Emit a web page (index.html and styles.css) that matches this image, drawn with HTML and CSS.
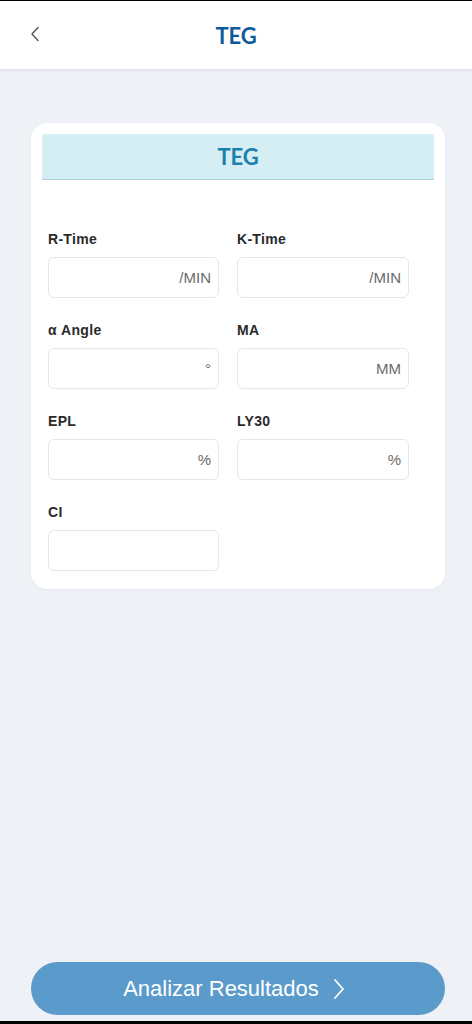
FILE: index.html
```html
<!DOCTYPE html>
<html lang="es">
<head>
<meta charset="utf-8">
<title>TEG</title>
<link rel="stylesheet" href="styles.css">
</head>
<body>
<div class="app">
  <header class="topbar">
    <button class="back" aria-label="Volver">
      <svg width="10" height="16" viewBox="0 0 10 16"><path d="M8 1.5 L2 8 L8 14.5" fill="none" stroke="#555" stroke-width="1.4" stroke-linecap="round" stroke-linejoin="round"/></svg>
    </button>
    <h1 class="title">TEG</h1>
  </header>
  <main class="content">
    <section class="card">
      <div class="card-head">TEG</div>
      <div class="form">
        <div class="field">
          <label class="label">R-Time</label>
          <div class="input"><span class="unit">/MIN</span></div>
        </div>
        <div class="field">
          <label class="label">K-Time</label>
          <div class="input"><span class="unit">/MIN</span></div>
        </div>
        <div class="field">
          <label class="label">α Angle</label>
          <div class="input"><span class="unit">°</span></div>
        </div>
        <div class="field">
          <label class="label">MA</label>
          <div class="input"><span class="unit">MM</span></div>
        </div>
        <div class="field">
          <label class="label">EPL</label>
          <div class="input"><span class="unit">%</span></div>
        </div>
        <div class="field">
          <label class="label">LY30</label>
          <div class="input"><span class="unit">%</span></div>
        </div>
        <div class="field">
          <label class="label">CI</label>
          <div class="input"></div>
        </div>
      </div>
    </section>
  </main>
  <footer class="footer">
    <button class="cta">
      <span>Analizar Resultados</span>
      <svg width="12" height="22" viewBox="0 0 12 22"><path d="M2 2 L10 11 L2 20" fill="none" stroke="#fff" stroke-width="1.8" stroke-linecap="round" stroke-linejoin="round"/></svg>
    </button>
  </footer>
</div>
</body>
</html>
```

FILE: styles.css
```css
* { box-sizing: border-box; }
html, body { margin: 0; padding: 0; }
body {
  font-family: "Liberation Sans", Arial, sans-serif;
  background: #000;
}
.app {
  width: 472px;
  height: 1024px;
  border-top: 1px solid #000;
  border-bottom: 3px solid #000;
  background: #eef1f6;
  display: flex;
  flex-direction: column;
}
.topbar {
  height: 68px;
  background: #fff;
  box-shadow: 0 1px 4px rgba(0, 0, 0, 0.09);
  display: flex;
  align-items: center;
  justify-content: center;
  position: relative;
  flex-shrink: 0;
}
.back {
  position: absolute;
  left: 29px;
  top: 24px;
  border: 0;
  background: none;
  padding: 0;
  width: 12px;
  height: 18px;
  display: flex;
  align-items: center;
  justify-content: center;
}
.title {
  margin: 0;
  font-family: Lato, "Open Sans", sans-serif;
  font-weight: 700;
  font-size: 22px;
  color: #0e5a9a;
  letter-spacing: -0.2px;
}
.content {
  flex: 1;
  padding: 54px 27px 0 31px;
}
.card {
  width: 414px;
  background: #fff;
  border-radius: 16px;
  padding: 11px 11px 18px;
  box-shadow: 0 1px 3px rgba(0, 0, 0, 0.05);
}
.card-head {
  height: 46px;
  background: #d4eef3;
  border-bottom: 1px solid #a9d2de;
  border-radius: 3px 3px 0 0;
  display: flex;
  align-items: center;
  justify-content: center;
  font-family: Lato, "Open Sans", sans-serif;
  font-weight: 700;
  font-size: 22px;
  color: #1b7fb0;
  letter-spacing: -0.2px;
}
.form {
  padding: 51px 0 0 6px;
  display: grid;
  grid-template-columns: 171px 172px;
  column-gap: 18px;
  row-gap: 24px;
}
.field {
  display: flex;
  flex-direction: column;
  gap: 10px;
}
.label {
  font-size: 14px;
  line-height: 16px;
  font-weight: 700;
  color: #2a2a2a;
  letter-spacing: 0.3px;
}
.input {
  height: 41px;
  border: 1px solid #e2e6ee;
  border-radius: 6px;
  background: #fff;
  display: flex;
  align-items: center;
  justify-content: flex-end;
  padding-right: 7px;
}
.unit {
  font-size: 15px;
  color: #6a6a6a;
}
.footer {
  padding: 0 27px 6px 31px;
  flex-shrink: 0;
}
.cta {
  width: 414px;
  height: 53px;
  border: 0;
  border-radius: 27px;
  background: #5a9bcb;
  color: #fff;
  font-family: "Liberation Sans", Arial, sans-serif;
  font-size: 22px;
  display: flex;
  align-items: center;
  justify-content: center;
  gap: 14px;
  padding: 0 8px 0 0;
}
```
